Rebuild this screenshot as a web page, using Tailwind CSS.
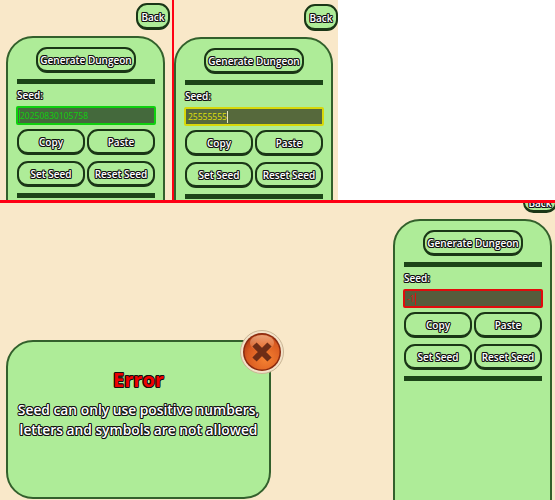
<!DOCTYPE html>
<html lang="en">
<head>
    <meta charset="UTF-8">
    <title>Dungeon Seed</title>
    <script src="https://cdn.jsdelivr.net/npm/@tailwindcss/browser@4"></script>
</head>
<body class="w-[555px] h-[500px] overflow-hidden bg-white font-['Open_Sans',sans-serif] text-[10px] font-semibold text-white [text-shadow:-1px_0_#111,1px_0_#111,0_-1px_#111,0_1px_#111,-0.7px_-0.7px_#111,0.7px_-0.7px_#111,-0.7px_0.7px_#111,0.7px_0.7px_#111] [&_button]:[text-shadow:inherit] [&_button]:pt-[2px]">
    <!-- Top row: two screenshots -->
    <div class="flex h-[200px]">
        <div class="w-[172px] bg-[#f9e8c9] overflow-hidden pt-[3px]">
            <div class="flex justify-end pr-[2px]">
                <button class="w-[34px] h-[27px] rounded-[11px] border-2 border-[#1a3616] border-b-[3px] bg-[#aeec98]">Back</button>
            </div>
            <div class="ml-[6px] mt-[6px] w-[159px] h-[300px] rounded-t-[27px] border-2 border-[#33602c] bg-[#aeec98] pl-[9px] pr-[8px] pt-[9px]">
                <div class="flex justify-center">
                    <button class="w-[100px] h-[26px] rounded-[11px] border-2 border-[#1a3616] border-b-[3px]">Generate Dungeon</button>
                </div>
                <div class="mt-[6px] h-[5px] bg-[#1c4417]"></div>
                <div class="mt-[3px] h-[16px] leading-[16px]">Seed:</div>
                <div class="mt-[3px] -mx-px h-[19px] flex items-center border-2 border-[#0fd00f] rounded-[2px] bg-[#44693c] px-px text-[8.5px] font-medium text-[#0fd00f] [text-shadow:none]"><span class="border-l border-[#0fd00f] leading-[12px]">20250830105758</span></div>
                <div class="mt-[4px] grid grid-cols-2 gap-x-[2px] gap-y-[6px]">
                    <button class="h-[26px] rounded-[11px] border-2 border-[#1a3616] border-b-[3px]">Copy</button>
                    <button class="h-[26px] rounded-[11px] border-2 border-[#1a3616] border-b-[3px]">Paste</button>
                    <button class="h-[26px] rounded-[11px] border-2 border-[#1a3616] border-b-[3px]">Set Seed</button>
                    <button class="h-[26px] rounded-[11px] border-2 border-[#1a3616] border-b-[3px]">Reset Seed</button>
                </div>
                <div class="mt-[6px] h-[5px] bg-[#1c4417]"></div>
            </div>
        </div>
        <div class="w-[2px] bg-[#ff0014]"></div>
        <div class="w-[164px] bg-[#f9e8c9] overflow-hidden pt-[4px]">
            <div class="flex justify-end">
                <button class="w-[34px] h-[27px] rounded-[11px] border-2 border-[#1a3616] border-b-[3px] bg-[#aeec98]">Back</button>
            </div>
            <div class="mt-[6px] w-[159px] h-[300px] rounded-t-[27px] border-2 border-[#33602c] bg-[#aeec98] pl-[9px] pr-[8px] pt-[9px]">
                <div class="flex justify-center">
                    <button class="w-[100px] h-[26px] rounded-[11px] border-2 border-[#1a3616] border-b-[3px]">Generate Dungeon</button>
                </div>
                <div class="mt-[6px] h-[5px] bg-[#1c4417]"></div>
                <div class="mt-[3px] h-[16px] leading-[16px]">Seed:</div>
                <div class="mt-[3px] -mx-px h-[19px] flex items-center border-2 border-[#d8d80a] rounded-[2px] bg-[#56693c] px-[2px] text-[8.5px] font-medium text-[#e0e00a] [text-shadow:none]"><span class="border-r border-[#e8e8c0] leading-[12px]">25555555</span></div>
                <div class="mt-[4px] grid grid-cols-2 gap-x-[2px] gap-y-[6px]">
                    <button class="h-[26px] rounded-[11px] border-2 border-[#1a3616] border-b-[3px]">Copy</button>
                    <button class="h-[26px] rounded-[11px] border-2 border-[#1a3616] border-b-[3px]">Paste</button>
                    <button class="h-[26px] rounded-[11px] border-2 border-[#1a3616] border-b-[3px]">Set Seed</button>
                    <button class="h-[26px] rounded-[11px] border-2 border-[#1a3616] border-b-[3px]">Reset Seed</button>
                </div>
                <div class="mt-[6px] h-[5px] bg-[#1c4417]"></div>
            </div>
        </div>
    </div>
    <div class="h-[3px] bg-[#ff0014]"></div>

    <!-- Bottom row: error dialog and third screenshot -->
    <div class="flex justify-between h-[297px] bg-[#f9e8c9] overflow-hidden">
        <div class="relative ml-[6px] mt-[137px] w-[265px] h-[159px] rounded-[27px] border-2 border-[#33602c] bg-[#aeec98] text-center">
            <div class="mt-[23px] text-[20px] leading-[30px] font-bold text-[#f00000]">Error</div>
            <div class="mt-[5px] text-[13.8px] leading-[20px]">Seed can only use positive numbers,<br>letters and symbols are not allowed</div>
            <svg class="absolute -top-[12px] -right-[15px]" width="44" height="44" viewBox="0 0 44 44">
                <defs>
                    <radialGradient id="ball" cx="0.6" cy="0.7" r="0.75">
                        <stop offset="0" stop-color="#f58232"/>
                        <stop offset="0.7" stop-color="#d95a20"/>
                        <stop offset="1" stop-color="#ad3a12"/>
                    </radialGradient>
                    <linearGradient id="shine" x1="0" y1="0" x2="0" y2="1">
                        <stop offset="0" stop-color="#ffc9a0" stop-opacity="0.7"/>
                        <stop offset="1" stop-color="#ffc9a0" stop-opacity="0"/>
                    </linearGradient>
                </defs>
                <circle cx="22" cy="22" r="21.5" fill="#f3e2c8" stroke="#c9b595"/>
                <circle cx="22" cy="22" r="19" fill="#8a2a0f"/>
                <circle cx="22" cy="22" r="17.5" fill="url(#ball)"/>
                <ellipse cx="22" cy="13" rx="12" ry="8" fill="url(#shine)"/>
                <path d="M14.5 14.5 L29.5 29.5 M29.5 14.5 L14.5 29.5" stroke="#6e2d16" stroke-width="6"/>
            </svg>
        </div>
        <div class="w-[162px] -mt-[11px] shrink-0">
            <div class="flex justify-end -mr-[2px]">
                <button class="w-[34px] h-[21px] rounded-[11px] border-2 border-[#1a3616] border-b-[3px] bg-[#aeec98]">Back</button>
            </div>
            <div class="mt-[6px] mr-[3px] h-[300px] rounded-t-[27px] border-2 border-[#33602c] bg-[#aeec98] pl-[9px] pr-[8px] pt-[9px]">
                <div class="flex justify-center">
                    <button class="w-[100px] h-[26px] rounded-[11px] border-2 border-[#1a3616] border-b-[3px]">Generate Dungeon</button>
                </div>
                <div class="mt-[6px] h-[5px] bg-[#1c4417]"></div>
                <div class="mt-[3px] h-[16px] leading-[16px]">Seed:</div>
                <div class="mt-[3px] -mx-px h-[19px] flex items-center border-2 border-[#e00c0c] rounded-[2px] bg-[#565c3c] px-[2px] text-[8.5px] font-medium text-[#e00c0c] [text-shadow:none]"><span class="border-r border-[#e00c0c] leading-[12px]">-1</span></div>
                <div class="mt-[4px] grid grid-cols-2 gap-x-[2px] gap-y-[6px]">
                    <button class="h-[26px] rounded-[11px] border-2 border-[#1a3616] border-b-[3px]">Copy</button>
                    <button class="h-[26px] rounded-[11px] border-2 border-[#1a3616] border-b-[3px]">Paste</button>
                    <button class="h-[26px] rounded-[11px] border-2 border-[#1a3616] border-b-[3px]">Set Seed</button>
                    <button class="h-[26px] rounded-[11px] border-2 border-[#1a3616] border-b-[3px]">Reset Seed</button>
                </div>
                <div class="mt-[6px] h-[5px] bg-[#1c4417]"></div>
            </div>
        </div>
    </div>
</body>
</html>
